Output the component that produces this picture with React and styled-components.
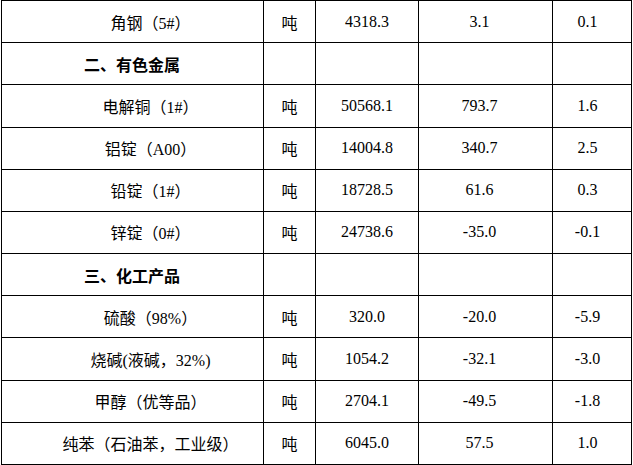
import React from 'react';
import styled, { createGlobalStyle } from 'styled-components';

const GlobalStyle = createGlobalStyle`
  html, body {
    margin: 0;
    padding: 0;
    background: #fff;
  }
`;

const Table = styled.table`
  margin-left: 1px;
  width: 631px;
  height: 465px;
  border-collapse: collapse;
  table-layout: fixed;
  color: #000;
  font-size: 16px;
`;

const Cell = styled.td`
  border: 1px solid #000;
  padding: 0;
  vertical-align: middle;
  text-align: center;
  white-space: nowrap;
  font-family: "Liberation Serif", "Noto Sans CJK SC", serif;
`;

const NameCell = styled(Cell)`
  padding-left: 36px;
  font-family: "Liberation Serif", "Noto Sans CJK SC", sans-serif;
`;

const HeadCell = styled(Cell)`
  text-align: left;
  padding-left: 82px;
  font-weight: bold;
  font-family: "Noto Sans CJK SC", sans-serif;
`;

const UnitCell = styled(Cell)`
  font-family: "Noto Sans CJK SC", sans-serif;
`;

const NumCell = styled(Cell)`
  padding-right: ${p => p.$shift || 0}px;
`;

const rows = [
  { name: '角钢（5#）', v: ['4318.3', '3.1', '0.1'] },
  { head: '二、有色金属' },
  { name: '电解铜（1#）', v: ['50568.1', '793.7', '1.6'] },
  { name: '铝锭（A00）', v: ['14004.8', '340.7', '2.5'] },
  { name: '铅锭（1#）', v: ['18728.5', '61.6', '0.3'] },
  { name: '锌锭（0#）', v: ['24738.6', '-35.0', '-0.1'] },
  { head: '三、化工产品' },
  { name: '硫酸（98%）', v: ['320.0', '-20.0', '-5.9'] },
  { name: '烧碱(液碱，32%)', v: ['1054.2', '-32.1', '-3.0'] },
  { name: '甲醇（优等品）', v: ['2704.1', '-49.5', '-1.8'] },
  { name: '纯苯（石油苯，工业级）', v: ['6045.0', '57.5', '1.0'] },
];

export default function App() {
  return (
    <>
      <GlobalStyle />
      <Table>
        <colgroup>
          <col style={{ width: 262 }} />
          <col style={{ width: 52 }} />
          <col style={{ width: 103 }} />
          <col style={{ width: 134 }} />
          <col style={{ width: 79 }} />
        </colgroup>
        <tbody>
          {rows.map((r, i) =>
            r.head ? (
              <tr key={i}>
                <HeadCell>{r.head}</HeadCell>
                <Cell />
                <Cell />
                <Cell />
                <Cell />
              </tr>
            ) : (
              <tr key={i}>
                <NameCell>{r.name}</NameCell>
                <UnitCell>吨</UnitCell>
                <NumCell>{r.v[0]}</NumCell>
                <NumCell $shift={12}>{r.v[1]}</NumCell>
                <NumCell $shift={9}>{r.v[2]}</NumCell>
              </tr>
            )
          )}
        </tbody>
      </Table>
    </>
  );
}
